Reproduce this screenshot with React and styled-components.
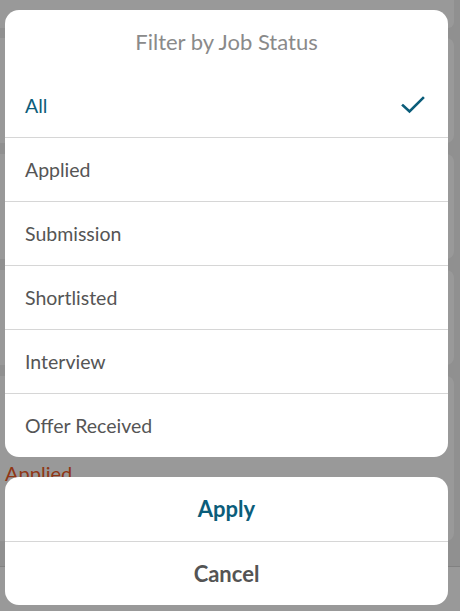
import React from "react";
import styled, { createGlobalStyle } from "styled-components";

const Global = createGlobalStyle`
  html, body { margin: 0; padding: 0; }
  body { font-family: Lato, "Open Sans", sans-serif; background: #f0f0f0; }
`;

const Screen = styled.div`
  position: relative;
  width: 460px;
  height: 611px;
  overflow: hidden;
  background: #f0f0f0;
`;

/* underlying page (dimmed by the overlay) */
const Page = styled.div`
  display: flex;
  flex-direction: column;
  height: 100%;
`;

const Header = styled.div`
  height: 28px;
  margin-right: 6px;
  background: #fff;
  border-bottom-right-radius: 6px;
  flex: none;
`;

const List = styled.div`
  flex: 1;
  display: flex;
  flex-direction: column;
  gap: 11px;
  padding: 10px 6px 0 0;
`;

const BgCard = styled.div`
  height: ${(p) => p.$h}px;
  background: #fff;
  border-radius: 0 8px 8px 0;
  padding: 85px 0 0 5px;
  box-sizing: border-box;
  color: #ef5a26;
  font-size: 20px;
  flex: none;
`;

const TabBar = styled.div`
  height: 44px;
  background: #fff;
  border-top: 1px solid #d8d8d8;
  flex: none;
`;

const Overlay = styled.div`
  position: absolute;
  inset: 0;
  background: rgba(0, 0, 0, 0.4);
  display: flex;
  flex-direction: column;
  gap: 20px;
  padding: 10px 12px 5px 5px;
`;

const Sheet = styled.div`
  background: #fff;
  border-radius: 14px;
  overflow: hidden;
  display: flex;
  flex-direction: column;
`;

const Title = styled.div`
  height: 63px;
  display: flex;
  align-items: center;
  justify-content: center;
  color: #8a8a8a;
  font-size: 22px;
`;

const Row = styled.div`
  height: 64px;
  box-sizing: border-box;
  display: flex;
  align-items: center;
  justify-content: space-between;
  padding: 0 22px 0 20px;
  font-size: 19.5px;
  color: ${(p) => (p.$active ? "#0b5d7a" : "#555555")};
  border-top: ${(p) => (p.$first ? "none" : "1px solid #d6d6d6")};
`;

const Action = styled.div`
  height: 64px;
  box-sizing: border-box;
  display: flex;
  align-items: center;
  justify-content: center;
  padding-bottom: 1px;
  font-size: 22px;
  font-weight: 700;
  color: ${(p) => (p.$primary ? "#0b5d7a" : "#545454")};
  border-top: ${(p) => (p.$primary ? "none" : "1px solid #d6d6d6")};
`;

const Check = () => (
  <svg width="26" height="20" viewBox="0 0 26 20" fill="none">
    <path d="M3 10.5 L9.5 16.5 L23 3" stroke="#0b5d7a" strokeWidth="2.6" strokeLinecap="square" />
  </svg>
);

const items = ["All", "Applied", "Submission", "Shortlisted", "Interview", "Offer Received"];

export default function App() {
  return (
    <>
      <Global />
      <Screen>
        <Page>
          <Header />
          <List>
            <BgCard $h={105} />
            <BgCard $h={105} />
            <BgCard $h={95} />
            <BgCard $h={165}>Applied</BgCard>
          </List>
          <TabBar />
        </Page>
        <Overlay>
          <Sheet>
            <Title>Filter by Job Status</Title>
            {items.map((it, i) => (
              <Row key={it} $first={i === 0} $active={i === 0}>
                <span>{it}</span>
                {i === 0 && <Check />}
              </Row>
            ))}
          </Sheet>
          <Sheet>
            <Action $primary>Apply</Action>
            <Action>Cancel</Action>
          </Sheet>
        </Overlay>
      </Screen>
    </>
  );
}
